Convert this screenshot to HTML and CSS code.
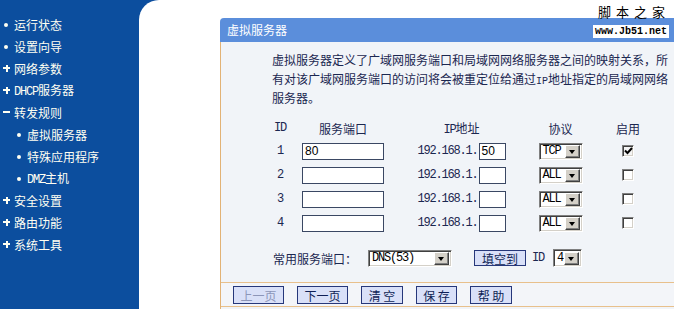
FILE: index.html
```html
<!DOCTYPE html>
<html lang="zh-CN">
<head>
<meta charset="utf-8">
<title>虚拟服务器</title>
<link rel="stylesheet" href="styles.css">
</head>
<body>
<div class="page">
  <nav class="nav">
    <div class="item"><i class="ic dot"></i><span>运行状态</span></div>
    <div class="item"><i class="ic dot"></i><span>设置向导</span></div>
    <div class="item"><i class="ic plus"></i><span>网络参数</span></div>
    <div class="item"><i class="ic plus"></i><span><span class="m">DHCP</span>服务器</span></div>
    <div class="item"><i class="ic minus"></i><span>转发规则</span></div>
    <div class="item sub"><i class="ic dot"></i><span>虚拟服务器</span></div>
    <div class="item sub"><i class="ic dot"></i><span>特殊应用程序</span></div>
    <div class="item sub"><i class="ic dot"></i><span><span class="m">DMZ</span>主机</span></div>
    <div class="item"><i class="ic plus"></i><span>安全设置</span></div>
    <div class="item"><i class="ic plus"></i><span>路由功能</span></div>
    <div class="item"><i class="ic plus"></i><span>系统工具</span></div>
  </nav>
  <main class="main">
    <div class="mark">
      <div class="mark-cn">脚本之家</div>
      <div class="mark-en">www.Jb51.net</div>
    </div>
    <section class="card">
      <div class="card-head">虚拟服务器</div>
      <div class="card-body">
        <div class="content">
          <p class="intro">
            <span class="ln">虚拟服务器定义了广域网服务端口和局域网网络服务器之间的映射关系，所</span>
            <span class="ln">有对该广域网服务端口的访问将会被重定位给通过<span class="lat">IP</span>地址指定的局域网网络</span>
            <span class="ln">服务器。</span>
          </p>
          <div class="grid">
            <div class="th m">ID</div>
            <div class="th">服务端口</div>
            <div class="th"><span class="m">IP</span>地址</div>
            <div class="th">协议</div>
            <div class="th">启用</div>

            <div class="m">1</div>
            <div class="field port">80</div>
            <div class="ip"><span class="m">192.168.1.</span><span class="field ipf">50</span></div>
            <div class="sel proto"><span class="sel-txt m">TCP</span><span class="arrow"></span></div>
            <div class="chk on"><svg width="9" height="8" viewBox="0 0 9 8"><path d="M1 3.5 L3.5 6 L8 1" fill="none" stroke="#000" stroke-width="2"/></svg></div>

            <div class="m">2</div>
            <div class="field port"></div>
            <div class="ip"><span class="m">192.168.1.</span><span class="field ipf"></span></div>
            <div class="sel proto"><span class="sel-txt m">ALL</span><span class="arrow"></span></div>
            <div class="chk"></div>

            <div class="m">3</div>
            <div class="field port"></div>
            <div class="ip"><span class="m">192.168.1.</span><span class="field ipf"></span></div>
            <div class="sel proto"><span class="sel-txt m">ALL</span><span class="arrow"></span></div>
            <div class="chk"></div>

            <div class="m">4</div>
            <div class="field port"></div>
            <div class="ip"><span class="m">192.168.1.</span><span class="field ipf"></span></div>
            <div class="sel proto"><span class="sel-txt m">ALL</span><span class="arrow"></span></div>
            <div class="chk"></div>
          </div>
          <div class="common">
            <span class="common-label">常用服务端口：</span>
            <div class="sel dns"><span class="sel-txt m">DNS(53)</span><span class="arrow"></span></div>
            <span class="btn fill">填空到</span>
            <span class="m idl">ID</span>
            <div class="sel idsel"><span class="sel-txt m">4</span><span class="arrow"></span></div>
          </div>
        </div>
        <div class="footer">
          <span class="btn fb w51 disabled">上一页</span>
          <span class="btn fb w51">下一页</span>
          <span class="btn fb w42">清 空</span>
          <span class="btn fb w41">保 存</span>
          <span class="btn fb w42">帮 助</span>
        </div>
      </div>
    </section>
  </main>
</div>
</body>
</html>
```

FILE: styles.css
```css
* { box-sizing: border-box; }
html, body {
  margin: 0;
  padding: 0;
}
body {
  width: 674px;
  height: 309px;
  overflow: hidden;
  background: #0c4e9e;
  font-family: "Noto Sans CJK SC", "Liberation Sans", sans-serif;
  font-size: 12px;
}
.m {
  font-family: "Liberation Mono", "Noto Sans CJK SC", monospace;
  font-size: 12px;
  letter-spacing: -1.2px;
}
.page {
  display: flex;
  height: 309px;
}

/* left menu */
.nav {
  width: 139px;
  flex: none;
  padding-top: 13px;
  color: #fffff2;
}
.item {
  display: flex;
  align-items: center;
  height: 22px;
  padding-left: 2px;
  white-space: nowrap;
}
.item.sub { padding-left: 15px; }
.ic {
  position: relative;
  display: inline-block;
  width: 8px;
  height: 8px;
  margin-right: 4px;
  flex: none;
}
.ic.dot::before {
  content: "";
  position: absolute;
  left: 2px; top: 3px;
  width: 4px; height: 4px;
  border-radius: 50%;
  background: #fffff2;
}
.ic.plus::before, .ic.minus::before {
  content: "";
  position: absolute;
  left: 1px; top: 3px;
  width: 7px; height: 2px;
  background: #fffff2;
}
.ic.plus::after {
  content: "";
  position: absolute;
  left: 3.5px; top: 0.5px;
  width: 2px; height: 7px;
  background: #fffff2;
}

/* main area */
.main {
  position: relative;
  flex: 1;
  background: #fff;
  border-top-left-radius: 20px;
  padding: 18px 0 0 81px;
}
.mark {
  position: absolute;
  top: 0;
  right: 5px;
  width: 76px;
  text-align: center;
  color: #000;
}
.mark-cn {
  margin-top: 4px;
  font-size: 13px;
  line-height: 15px;
  letter-spacing: 5px;
  padding-left: 5px;
  white-space: nowrap;
}
.mark-en {
  margin-top: 6px;
  background: #fff;
  height: 13px;
  line-height: 13px;
  font-family: "Liberation Mono", monospace;
  font-size: 10px;
  font-weight: bold;
  white-space: nowrap;
}

.card {
  height: 100%;
  background: #f1f4f8;
  border-top-left-radius: 4px;
  display: flex;
  flex-direction: column;
}
.card-head {
  height: 24px;
  line-height: 24px;
  background: #5b8edb;
  color: #fff;
  padding-left: 7px;
  border-top-left-radius: 4px;
}
.card-body {
  flex: 1;
  border-left: 1px solid #e2b275;
  color: #1b2750;
}
.content {
  padding-left: 51px;
}
.intro {
  margin: 8px 0 0;
  width: 400px;
  line-height: 19px;
}
.ln {
  display: block;
  height: 19px;
  white-space: nowrap;
}
.intro .lat {
  font-family: "Liberation Mono", monospace;
  font-size: 10px;
  line-height: 10px;
}

.grid {
  margin-top: 10px;
  display: grid;
  grid-template-columns: 16px 110px 127px 71px 64px;
  grid-template-rows: 22px 24px 24px 24px 24px;
  align-items: center;
  justify-items: center;
}
.field {
  display: block;
  height: 17px;
  background: #fff;
  border: 1px solid #3a4763;
  font-family: "Liberation Sans", sans-serif;
  font-size: 12px;
  line-height: 15px;
  padding-left: 2px;
  color: #000;
}
.port { width: 82px; }
.ip {
  display: flex;
  align-items: center;
}
.ipf { width: 27px; margin-left: 1px; }

.sel {
  display: flex;
  align-items: center;
  height: 17px;
  background: #fff;
  border-top: 1px solid #808080;
  border-left: 1px solid #808080;
  border-bottom: 1px solid #fff;
  border-right: 1px solid #fff;
  box-shadow: inset 1px 1px 0 #404040, inset -1px -1px 0 #d4d0c8;
  padding: 2px 2px 2px 3px;
  color: #000;
}
.sel-txt {
  flex: 1;
  line-height: 13px;
  white-space: nowrap;
}
.arrow {
  position: relative;
  flex: none;
  width: 15px;
  height: 13px;
  background: #d4d0c8;
  border-top: 1px solid #fff;
  border-left: 1px solid #fff;
  border-bottom: 1px solid #404040;
  border-right: 1px solid #404040;
  box-shadow: inset -1px -1px 0 #808080;
}
.arrow::after {
  content: "";
  position: absolute;
  left: 3px;
  top: 4px;
  border-left: 3.5px solid transparent;
  border-right: 3.5px solid transparent;
  border-top: 4px solid #000;
}
.proto { width: 44px; }
.chk {
  width: 12px;
  height: 12px;
  background: #fff;
  border-top: 1px solid #808080;
  border-left: 1px solid #808080;
  border-bottom: 1px solid #fff;
  border-right: 1px solid #fff;
  box-shadow: inset 1px 1px 0 #404040, inset -1px -1px 0 #d4d0c8;
  display: flex;
  align-items: center;
  justify-content: center;
}
.chk.on { background: #f4f4f4; }

.common {
  margin-top: 14px;
  height: 18px;
  display: flex;
  align-items: center;
}
.common-label { margin-left: 1px; }
.dns { width: 84px; margin-left: 11px; }
.btn {
  display: inline-flex;
  align-items: center;
  justify-content: center;
  background: #d9e0f8;
  border: 1px solid #26377a;
  color: #0f1f55;
  white-space: pre;
}
.fill { width: 52px; height: 16px; margin-left: 22px; }
.idl { margin-left: 6px; }
.idsel { width: 29px; margin-left: 9px; height: 18px; }

.footer {
  margin-top: 15px;
  border-top: 1px solid #e8c08c;
  border-bottom: 1px solid #e8c08c;
  padding: 3px 0 2px 12px;
  display: flex;
  gap: 13px;
  background: #f3f5f9;
}
.fb { height: 18px; }
.w51 { width: 51px; }
.w42 { width: 42px; }
.w41 { width: 41px; }
.disabled { color: #8c95b8; }
```
